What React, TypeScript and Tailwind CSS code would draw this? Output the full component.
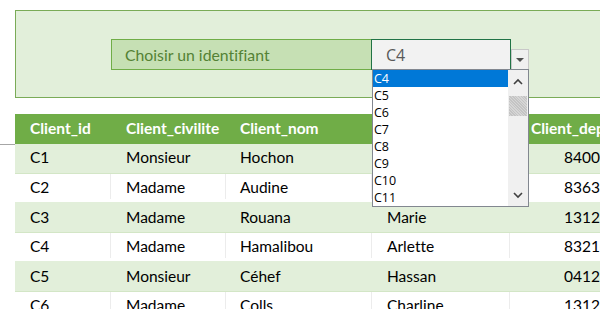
import React from 'react';

interface Client {
  id: string;
  civilite: string;
  nom: string;
  prenom: string;
  dep: string;
}

const clients: Client[] = [
  { id: 'C1', civilite: 'Monsieur', nom: 'Hochon', prenom: 'Paul', dep: '84000' },
  { id: 'C2', civilite: 'Madame', nom: 'Audine', prenom: 'Lucie', dep: '83630' },
  { id: 'C3', civilite: 'Madame', nom: 'Rouana', prenom: 'Marie', dep: '13120' },
  { id: 'C4', civilite: 'Madame', nom: 'Hamalibou', prenom: 'Arlette', dep: '83210' },
  { id: 'C5', civilite: 'Monsieur', nom: 'Céhef', prenom: 'Hassan', dep: '04120' },
  { id: 'C6', civilite: 'Madame', nom: 'Colls', prenom: 'Charline', dep: '13120' },
];

const options = ['C4', 'C5', 'C6', 'C7', 'C8', 'C9', 'C10', 'C11'];

function Row({ client, index }: { client: Client; index: number }) {
  const striped = index % 2 === 0;
  const cell = striped ? 'border-r border-[#e2efda]' : 'border-r border-[#ececec]';
  return (
    <div
      className={`flex h-[29.6px] items-end pb-[3px] text-[15.5px] text-black border-b ${
        striped ? 'bg-[#e2efda] border-[#d3e6c6]' : 'bg-white border-[#e2efda]'
      }`}
    >
      <div className={`w-[96px] shrink-0 pl-[15px] self-stretch flex items-end ${cell}`}>{client.id}</div>
      <div className={`w-[115px] shrink-0 pl-[15px] self-stretch flex items-end ${cell}`}>{client.civilite}</div>
      <div className={`w-[146px] shrink-0 pl-[14px] self-stretch flex items-end ${cell}`}>{client.nom}</div>
      <div className={`w-[138px] shrink-0 pl-[15px] self-stretch flex items-end ${cell}`}>{client.prenom}</div>
      <div className="w-[102px] shrink-0 pr-[3px] self-stretch flex items-end justify-end">{client.dep}</div>
    </div>
  );
}

export default function App() {
  return (
    <div className="relative w-[600px] h-[309px] overflow-hidden bg-white font-['Lato',sans-serif] [font-variant-ligatures:none]">
      {/* search panel */}
      <div className="ml-[15px] mt-[10px] h-[88px] w-[600px] border border-r-0 border-[#7aab57] bg-[#e2efda] pl-[95px] pt-[28px]">
        <div className="flex items-start">
          <div className="w-[261px] h-[31px] shrink-0 border border-[#70ad47] bg-[#c6e0b4] pl-[13px] flex items-center text-[15.8px] text-[#548235]">
            Choisir un identifiant
          </div>
          <div className="-ml-[1px] w-[140px] h-[31px] shrink-0 border border-[#217346] bg-[#f2f2f2] pl-[14px] flex items-center text-[16px] text-[#595959] font-['Open_Sans',sans-serif]">
            C4
          </div>
          <div className="mt-[10px] w-[18px] h-[21px] shrink-0 border border-[#c8c8c8] bg-[#f0f0f0] flex items-center justify-center">
            <div className="w-0 h-0 border-l-[4px] border-r-[4px] border-t-[4px] border-l-transparent border-r-transparent border-t-[#505050]" />
          </div>
        </div>
      </div>

      {/* gridline left of table */}
      <div className="absolute left-0 top-[144px] w-[15px] h-px bg-[#a6a6a6]" />

      {/* table */}
      <div className="ml-[15px] mt-[16px] w-[620px]">
        <div className="flex h-[30px] items-center bg-[#70ad47] text-white font-bold text-[15.5px]">
          <div className="w-[96px] shrink-0 pl-[15px]">Client_id</div>
          <div className="w-[115px] shrink-0 pl-[15px]">Client_civilite</div>
          <div className="w-[146px] shrink-0 pl-[14px]">Client_nom</div>
          <div className="w-[138px] shrink-0 pl-[15px]">Client_prenom</div>
          <div className="w-[115px] shrink-0 pl-[21px] whitespace-nowrap">Client_dep</div>
        </div>
        {clients.map((c, i) => (
          <Row key={c.id} client={c} index={i} />
        ))}
      </div>

      {/* open dropdown list */}
      <div className="absolute left-[372px] top-[69px] w-[157px] h-[138px] border border-[#828790] bg-white flex font-['Open_Sans',sans-serif] text-[12.5px] text-black">
        <div className="flex-1 flex flex-col">
          {options.map((o, i) => (
            <div
              key={o}
              className={`h-[17.1px] leading-[17px] pl-[1px] ${i === 0 ? 'bg-[#0078d7] text-white' : ''}`}
            >
              {o}
            </div>
          ))}
        </div>
        <div className="w-[20px] shrink-0 bg-[#f0f0f0] flex flex-col items-center">
          <svg width="10" height="7" viewBox="0 0 10 7" className="mt-[8px]">
            <path d="M1 6 L5 2 L9 6" fill="none" stroke="#404040" strokeWidth="1.6" />
          </svg>
          <div className="mt-[11px] w-[18px] h-[20px] bg-[repeating-linear-gradient(45deg,#c4c4c4_0px,#c4c4c4_1px,#d6d6d6_1px,#d6d6d6_2px)]" />
          <div className="flex-1" />
          <svg width="10" height="7" viewBox="0 0 10 7" className="mb-[7px]">
            <path d="M1 1 L5 5 L9 1" fill="none" stroke="#404040" strokeWidth="1.6" />
          </svg>
        </div>
      </div>
    </div>
  );
}
